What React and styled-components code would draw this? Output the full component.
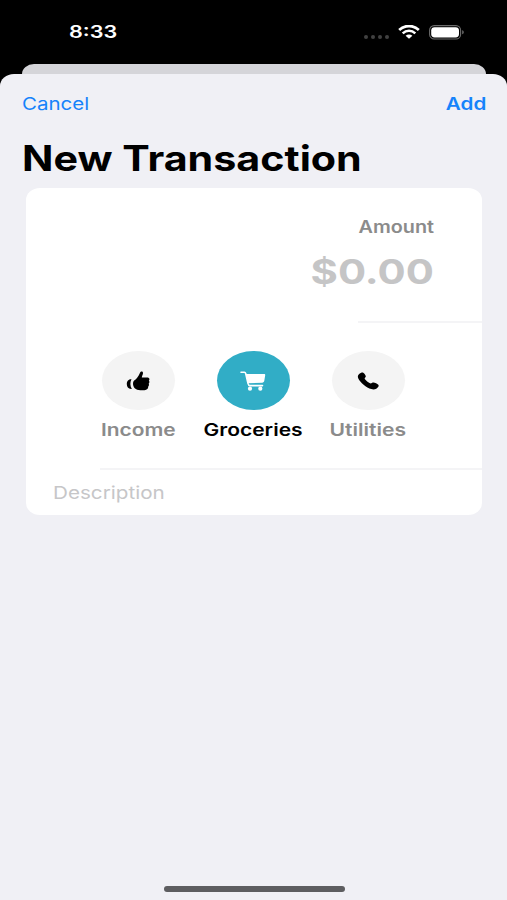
import styled, { createGlobalStyle } from "styled-components";

const categories = [
  { name: "Income", icon: "like", stretch: 1.23 },
  { name: "Groceries", icon: "cart", stretch: 1.235, active: true },
  { name: "Utilities", icon: "phone", stretch: 1.24 },
];

const LikeIcon = () => (
  <svg width="24" height="22" viewBox="0 0 24 22">
    <path
      fill="currentColor"
      d="M8.2 10.5C10.6 9 12.3 6.8 13.9 3C14.8 .9 17.2 1.1 17 3.3C16.9 4.6 16 5.7 15.8 7.4H21.2C23.8 7.4 23.8 10 22.8 10.5C23.8 11.6 23.4 13 22.7 13.5C23.3 14.7 22.9 15.9 22.2 16.5C22.4 18.6 21 20 18.5 20.2C14.8 20.5 12.1 20.2 9.8 18.9C6.8 17.5 6.2 12 8.2 10.5Z"
    />
    <path
      fill="currentColor"
      d="M5.5 9.3C2.2 9 .8 11.5 .8 14.1C.8 17.1 2.5 19.4 5.8 19C3.9 16 4 12.2 5.5 9.3Z"
    />
  </svg>
);

const CartIcon = () => (
  <svg width="26" height="20" viewBox="0 0 26 20" fill="none" stroke="currentColor">
    <path fill="currentColor" stroke="none" d="M5.8 3H24.2C25 3 25.3 3.6 25.2 4.2L24.3 9.8C24.1 11 23.4 11.6 22.2 11.7L8 12.3Z" />
    <path strokeWidth="1.6" strokeLinecap="round" strokeLinejoin="round" d="M1 1.3H4.4C5.2 1.3 5.5 1.8 5.7 2.5L8 12.5C8.2 13.8 8.8 14.6 10 14.6H22.5" />
    <circle cx="10" cy="17.7" r="2.1" fill="currentColor" stroke="none" />
    <circle cx="20.3" cy="17.7" r="2.1" fill="currentColor" stroke="none" />
  </svg>
);

const PhoneIcon = () => (
  <svg width="22" height="18" viewBox="0 0 22 18">
    <path
      fill="currentColor"
      d="M4.2 .7C5.6 .1 6.8 .8 7.8 2.2C8.9 3.8 9.2 4.7 8.2 5.6C7.5 6.3 7.5 6.8 8.2 7.6C9.4 9 10.8 10.2 12.5 11.1C13.5 11.6 14.1 11.6 14.9 11C16 10.3 17.2 10.4 19.1 11.3C21.6 12.5 22.1 13.5 21.3 14.8C20 17 17.4 17.9 14.3 17.1C9.3 15.8 3.2 10.7 1.2 6.3C.2 3.7 1.4 1.9 4.2 .7Z"
    />
  </svg>
);

const WifiIcon = () => (
  <svg width="22" height="14" viewBox="0 0 22 14" fill="none" stroke="#fff">
    <path strokeWidth="2.7" d="M1.2 5C6.5 -.3 15.5 -.3 20.8 5" />
    <path strokeWidth="2.5" d="M4.7 8.4C8.3 5 13.7 5 17.3 8.4" />
    <path fill="#fff" stroke="none" d="M7.6 10.7C9.5 9 12.5 9 14.4 10.7L11 13.7Z" />
  </svg>
);

const BatteryIcon = () => (
  <svg width="36" height="15" viewBox="0 0 36 15">
    <rect x=".6" y=".6" width="31" height="13.4" rx="4.6" fill="none" stroke="#6b6b6b" strokeWidth="1.1" />
    <rect x="2.2" y="2.2" width="27.8" height="10.2" rx="3.4" fill="#fff" />
    <path d="M33.2 5.3C35.3 6 35.3 8.6 33.2 9.3Z" fill="#6b6b6b" />
  </svg>
);

const icons = { like: LikeIcon, cart: CartIcon, phone: PhoneIcon };

const App = () => {
  return (
    <Screen>
      <GlobalStyle />
      <StatusBar>
        <Text $size={17.3} $weight={600} $stretch={1.25} $color="#fff">8:33</Text>
        <StatusIcons>
          <Dots><i /><i /><i /><i /></Dots>
          <WifiIcon />
          <BatteryIcon />
        </StatusIcons>
      </StatusBar>
      <BackSheet />
      <Sheet>
        <NavBar>
          <Text as="button" $size={17.5} $stretch={1.17} $color="#1683fb">Cancel</Text>
          <Text as="button" $size={17.5} $weight={600} $stretch={1.18} $color="#1683fb" $origin="right">Add</Text>
        </NavBar>
        <Title>
          <Text $size={35} $weight={700} $stretch={1.178}>New Transaction</Text>
        </Title>
        <Card>
          <AmountRow>
            <Text $size={16.8} $weight={600} $stretch={1.18} $color="#8b8b8b" $origin="right">Amount</Text>
            <Text $size={34.5} $weight={700} $stretch={1.21} $color="#c5c5c6" $origin="right">$0.00</Text>
          </AmountRow>
          <Divider $width={124} />
          <Categories>
            {categories.map(({ name, icon, stretch, active }) => {
              const Icon = icons[icon];
              return (
                <Category key={name}>
                  <Bubble $active={active}><Icon /></Bubble>
                  <Text $size={17} $weight={600} $stretch={stretch} $color={active ? "#000" : "#8b8b8b"} $origin="center">
                    {name}
                  </Text>
                </Category>
              );
            })}
          </Categories>
          <Divider $width={382} />
          <DescriptionRow>
            <Text $size={17.5} $stretch={1.18} $color="#c6c6c8">Description</Text>
          </DescriptionRow>
        </Card>
        <HomeIndicator />
      </Sheet>
    </Screen>
  );
};

const GlobalStyle = createGlobalStyle`
    *{
        box-sizing: border-box;
    }
    body{
        margin: 0;
        background-color: #000;
        font-family: Inter, "Liberation Sans", sans-serif;
    }
`;
const Screen = styled.main`
    width: 507px;
    height: 900px;
    display: flex;
    flex-direction: column;
    background-color: #000;
    overflow: hidden;
`;
const Text = styled.span`
    display: block;
    padding: 0;
    border: 0;
    background: none;
    font-family: inherit;
    font-size: ${({ $size }) => $size}px;
    font-weight: ${({ $weight }) => $weight || 400};
    line-height: 1.2;
    color: ${({ $color }) => $color || "#000"};
    white-space: nowrap;
    transform: scaleX(${({ $stretch }) => $stretch});
    transform-origin: ${({ $origin }) => $origin || "left"} center;
`;
const StatusBar = styled.header`
    height: 64px;
    padding: 0 42px 0 69px;
    display: flex;
    align-items: center;
    justify-content: space-between;
`;
const StatusIcons = styled.div`
    display: flex;
    align-items: center;
    gap: 9px;
`;
const Dots = styled.div`
    display: flex;
    gap: 3px;
    padding-top: 9px;
    i{
        width: 4px;
        height: 4px;
        border-radius: 50%;
        background-color: #414141;
    }
`;
const BackSheet = styled.div`
    height: 10px;
    flex: none;
    margin: 0 21px 0 22px;
    border-radius: 12px 12px 0 0 / 10px 10px 0 0;
    background-color: #d5d5d9;
`;
const Sheet = styled.section`
    flex: 1;
    display: flex;
    flex-direction: column;
    border-radius: 14px 14px 0 0 / 12px 12px 0 0;
    background-color: #f0f0f5;
`;
const NavBar = styled.nav`
    height: 60px;
    padding: 0 21px 2px 22px;
    display: flex;
    align-items: center;
    justify-content: space-between;
`;
const Title = styled.h1`
    height: 54px;
    margin: 0;
    padding: 3px 0 0 22px;
`;
const Card = styled.div`
    width: 456px;
    height: 327px;
    margin-left: 26px;
    display: flex;
    flex-direction: column;
    align-items: flex-end;
    border-radius: 14px / 12px;
    background-color: #fff;
`;
const AmountRow = styled.div`
    height: 133px;
    padding: 29px 48px 0 0;
    display: flex;
    flex-direction: column;
    align-items: flex-end;
    gap: 14px;
`;
const Divider = styled.div`
    width: ${({ $width }) => $width}px;
    height: 2px;
    flex: none;
    background-color: #f4f4f6;
`;
const Categories = styled.div`
    width: 100%;
    height: 145px;
    padding: 28px 0 0 54.5px;
    display: flex;
`;
const Category = styled.div`
    width: 115px;
    display: flex;
    flex-direction: column;
    align-items: center;
    gap: 10px;
`;
const Bubble = styled.div`
    width: 73px;
    height: 59px;
    padding-right: 1px;
    display: flex;
    align-items: center;
    justify-content: center;
    border-radius: 50%;
    color: ${({ $active }) => ($active ? "#fff" : "#000")};
    background-color: ${({ $active }) => ($active ? "#31adc6" : "#f4f4f4")};
`;
const DescriptionRow = styled.div`
    width: 100%;
    flex: 1;
    padding-left: 27px;
    display: flex;
    align-items: center;
`;
const HomeIndicator = styled.div`
    width: 181px;
    height: 6px;
    margin: auto 0 8px 164px;
    border-radius: 3px;
    background-color: #5d5d60;
`;

export default App;
